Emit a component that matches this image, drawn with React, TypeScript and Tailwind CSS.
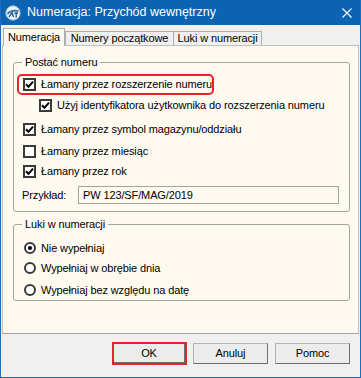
import React from "react";

function Check({ checked }: { checked?: boolean }) {
  return (
    <span className="w-[13px] h-[13px] border-2 border-[#3a3a3a] bg-white flex items-center justify-center shrink-0">
      {checked && (
        <svg width="9" height="9" viewBox="0 0 9 9">
          <path d="M1 4.2 L3.5 6.8 L8 1.6" fill="none" stroke="#000" strokeWidth="2" />
        </svg>
      )}
    </span>
  );
}

function Radio({ checked }: { checked?: boolean }) {
  return (
    <span className="w-[12px] h-[12px] rounded-full border-2 border-[#3a3a3a] bg-white flex items-center justify-center shrink-0">
      {checked && <span className="w-[4px] h-[4px] rounded-full bg-black" />}
    </span>
  );
}

function Row({ checked, label, className = "" }: { checked?: boolean; label: string; className?: string }) {
  return (
    <div className={"flex items-center gap-[5px] h-[13px] " + className}>
      <Check checked={checked} />
      <span className="leading-[13px] whitespace-nowrap">{label}</span>
    </div>
  );
}

function RadioRow({ checked, label, className = "" }: { checked?: boolean; label: string; className?: string }) {
  return (
    <div className={"flex items-center gap-[5px] h-[12px] ml-[10px] " + className}>
      <Radio checked={checked} />
      <span className="leading-[13px] whitespace-nowrap">{label}</span>
    </div>
  );
}

function AppIcon() {
  return (
    <svg width="16" height="16" viewBox="0 0 16 16">
      <circle cx="8" cy="8" r="7.2" fill="#e8f1f8" stroke="#9fb6c8" strokeWidth="1" />
      <path d="M2.5 9 Q6 4.5 13.5 6" fill="none" stroke="#2a6fa8" strokeWidth="1.6" />
      <path d="M4 12 L7 7.5 L8.5 12 M9.5 8 L13 8 M11.2 8 L11.2 12.5" fill="none" stroke="#1d4f7c" strokeWidth="1.3" />
    </svg>
  );
}

function Button({ label }: { label: string }) {
  return (
    <div className="w-[75px] h-[21px] bg-[#ececec] border border-[#b4b4b4] border-r-[#6e6e6e] border-b-[#6e6e6e] flex items-center justify-center leading-none">
      {label}
    </div>
  );
}

export default function App() {
  return (
    <div className="w-[361px] h-[378px] flex flex-col bg-[#0b63b2] border-x border-b border-[#1a6fc0] font-['Liberation_Sans',Arial,sans-serif] text-[11px] tracking-[-0.12px] text-black overflow-hidden">
      {/* title bar */}
      <div className="h-[25px] shrink-0 flex items-center pl-[4px] pr-[8px] text-white">
        <AppIcon />
        <span className="ml-[6px] text-[12.5px] tracking-normal leading-none">Numeracja: Przychód wewnętrzny</span>
        <svg className="ml-auto" width="10" height="10" viewBox="0 0 10 10">
          <path d="M0.5 0.5 L9.5 9.5 M9.5 0.5 L0.5 9.5" stroke="#fff" strokeWidth="1.1" />
        </svg>
      </div>

      <div className="flex-1 bg-[#f0f0f0] flex flex-col">
        {/* tabs */}
        <div className="h-[20px] flex items-end pl-[2px]">
          <div className="relative z-10 -mb-px h-[18px] w-[62px] bg-[#fffaf0] border border-b-0 border-[#adadad] flex items-center justify-center">
            Numeracja
          </div>
          <div className="h-[14px] w-[109px] bg-[#f0f0f0] border border-b-0 border-[#adadad] flex items-center justify-center">
            Numery początkowe
          </div>
          <div className="h-[14px] w-[89px] -ml-px bg-[#f0f0f0] border border-b-0 border-[#adadad] flex items-center justify-center">
            Luki w numeracji
          </div>
        </div>

        {/* panel */}
        <div className="mx-[1px] h-[289px] bg-[#fffaf0] border border-[#c0c0c0] border-b-[#a0a0a0] pt-[9px]">
          <fieldset className="ml-[10px] w-[337px] border border-[#a6a49e] rounded-[3px] pb-[7px]">
            <legend className="ml-[8px] px-[3px] leading-[14px]">Postać numeru</legend>
            <div className="mt-[5px] ml-[3px] w-[197px] h-[21px] border-2 border-[#e8232b] rounded-[5px] flex items-center pl-[4px]">
              <Row checked label="Łamany przez rozszerzenie numeru" />
            </div>
            <Row checked className="mt-[4px] ml-[25px]" label="Użyj identyfikatora użytkownika do rozszerzenia numeru" />
            <Row checked className="mt-[11px] ml-[9px]" label="Łamany przez symbol magazynu/oddziału" />
            <Row className="mt-[9px] ml-[9px]" label="Łamany przez miesiąc" />
            <Row checked className="mt-[7px] ml-[9px]" label="Łamany przez rok" />
            <div className="mt-[8px] ml-[8px] flex items-center">
              <span className="w-[56px]">Przykład:</span>
              <div className="w-[261px] h-[18px] border border-[#a6a49e] bg-[#fffaf0] flex items-center pl-[4px]">
                PW 123/SF/MAG/2019
              </div>
            </div>
          </fieldset>

          <fieldset className="mt-[5px] ml-[10px] w-[337px] border border-[#a6a49e] rounded-[3px] pb-[4px]">
            <legend className="ml-[8px] px-[3px] leading-[14px]">Luki w numeracji</legend>
            <RadioRow checked className="mt-[11px]" label="Nie wypełniaj" />
            <RadioRow className="mt-[8px]" label="Wypełniaj w obrębie dnia" />
            <RadioRow className="mt-[10px]" label="Wypełniaj bez względu na datę" />
          </fieldset>
        </div>

        {/* buttons */}
        <div className="mt-[8px] flex items-center justify-end pr-[10px]">
          <div className="w-[75px] h-[23px] border-2 border-[#e8232b] mr-[6px] flex">
            <div className="flex-1 bg-[#ececec] border-r border-b border-[#6e6e6e] flex items-center justify-center leading-none">
              OK
            </div>
          </div>
          <div className="mr-[7px]">
            <Button label="Anuluj" />
          </div>
          <Button label="Pomoc" />
        </div>
      </div>
    </div>
  );
}
